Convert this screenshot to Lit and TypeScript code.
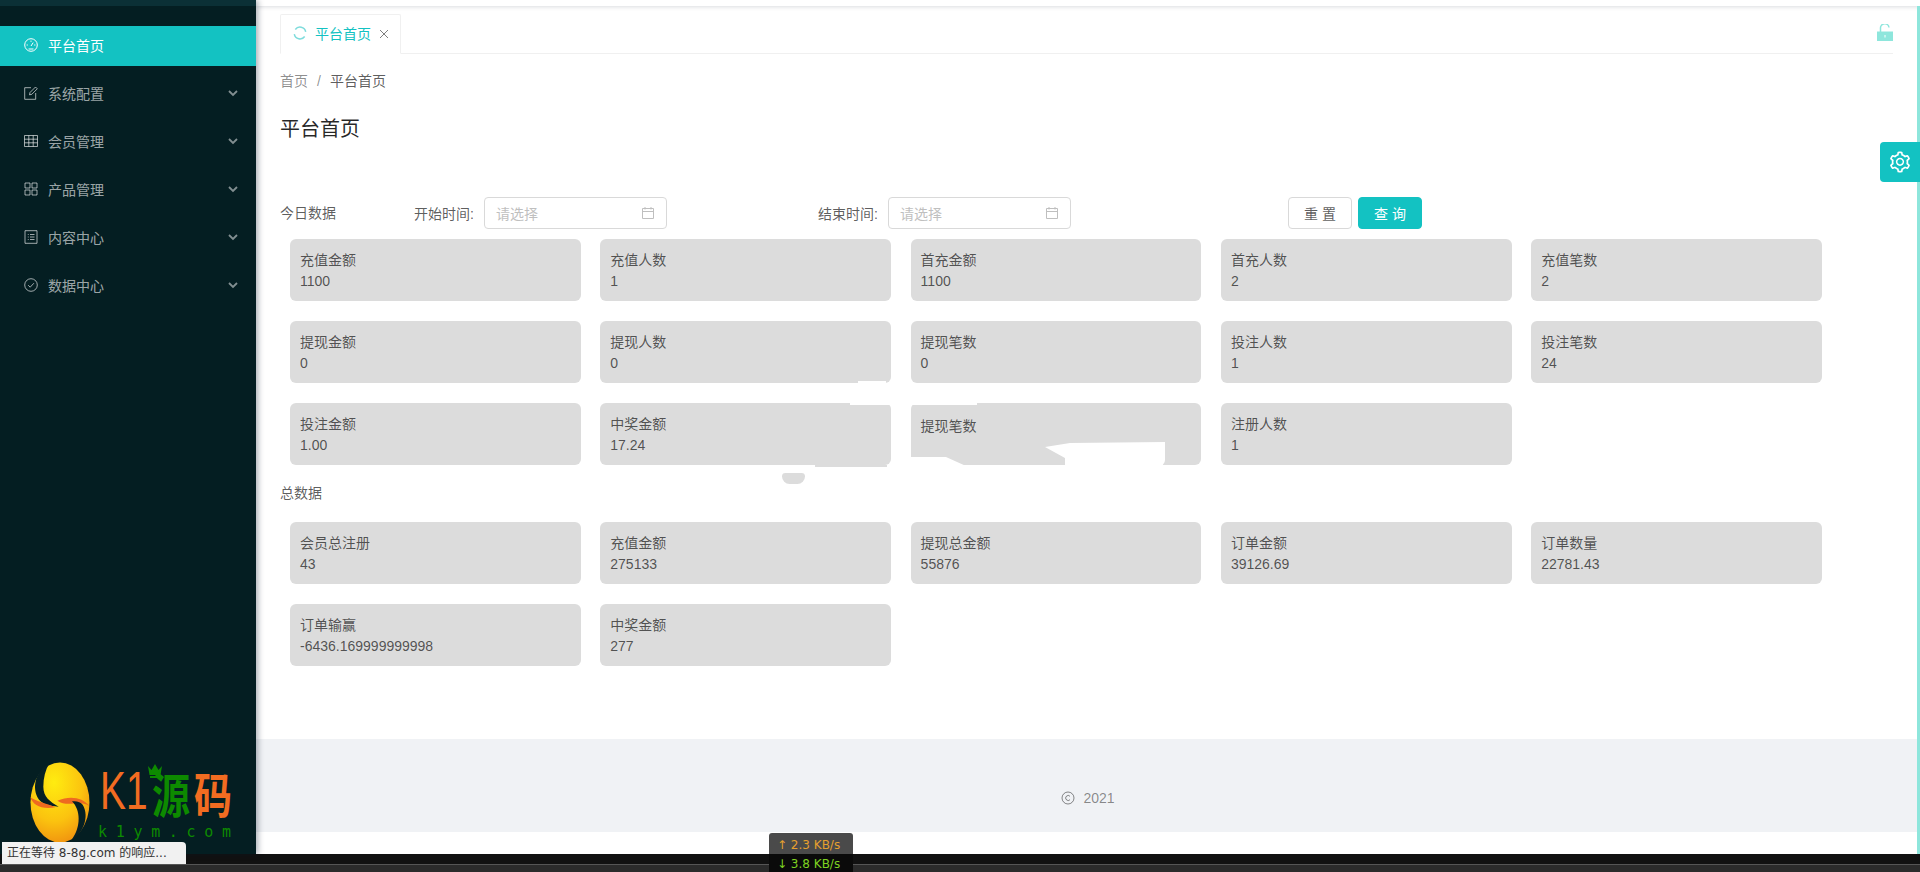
import { LitElement, html, css, svg } from "lit";
import { customElement } from "lit/decorators.js";

const today = [
  ["充值金额", "1100"], ["充值人数", "1"], ["首充金额", "1100"], ["首充人数", "2"], ["充值笔数", "2"],
  ["提现金额", "0"], ["提现人数", "0"], ["提现笔数", "0"], ["投注人数", "1"], ["投注笔数", "24"],
  ["投注金额", "1.00"], ["中奖金额", "17.24"], ["提现笔数", ""], ["注册人数", "1"],
];
const total = [
  ["会员总注册", "43"], ["充值金额", "275133"], ["提现总金额", "55876"], ["订单金额", "39126.69"], ["订单数量", "22781.43"],
  ["订单输赢", "-6436.169999999998"], ["中奖金额", "277"],
];

const icons: Record<string, unknown> = {
  dash: svg`<circle cx="7" cy="7" r="6.300"/><path d="M7 8 9.200 4.600M2.600 7h1.200M10.200 7h1.200M7 2.600v1.200M4.500 11h5"/>`,
  edit: svg`<path d="M11.700 7V13.300H.7V1.700h6.300M5.500 8.800 6 6.500 11.500 1l1.800 1.800L7.800 8.300z"/>`,
  table: svg`<path d="M.5 1.500h13v11H.5zM.5 5.200h13M.5 8.800h13M4.800 1.500v11M9.200 1.500v11"/>`,
  grid: svg`<path d="M1 1h5v5H1zM8 1h5v5H8zM1 8h5v5H1zM8 8h5v5H8z"/>`,
  doc: svg`<path d="M1 .7h12v12.600H1zM6 4.500h4.500M6 7h4.500M6 9.500h4.500M3.800 4.500h.9M3.800 7h.9M3.800 9.500h.9"/>`,
  check: svg`<circle cx="7" cy="7" r="6.300"/><path d="M4.200 7.200 6.200 9.200 9.900 5.200"/>`,
};
const menu = [
  ["dash", "平台首页"], ["edit", "系统配置"], ["table", "会员管理"], ["grid", "产品管理"], ["doc", "内容中心"], ["check", "数据中心"],
];

@customElement("app-root")
export class AppRoot extends LitElement {
  static styles = css`
    :host { display: block; height: 872px; width: 1920px; overflow: hidden; position: relative;
      font-family: "Liberation Sans", "Noto Sans CJK SC", sans-serif; font-size: 14px; color: rgba(0,0,0,.65); background: #fff; }
    .page { display: flex; height: 854px; }
    .side { width: 256px; flex: none; background: #041e22; position: relative; z-index: 2;
      box-shadow: 2px 0 6px rgba(0,21,41,.35); display: flex; flex-direction: column; }
    .side-top { height: 6px; background: #0b3036; margin-bottom: 20px; flex: none; }
    .mi { height: 40px; margin-bottom: 8px; display: flex; align-items: center; padding-left: 24px; padding-bottom: 2px; box-sizing: border-box;
      color: rgba(255,255,255,.62); position: relative; }
    .mi.on { background: #13c2c2; color: #fff; }
    .mi svg.ic { width: 14px; height: 14px; margin-right: 10px; fill: none; stroke: currentColor; stroke-width: 1; }
    .mi svg.ar { position: absolute; right: 18px; top: 14px; width: 10px; height: 10px; fill: none; stroke: rgba(255,255,255,.5); stroke-width: 1.800; }
    .logo { margin-top: auto; height: 90px; padding-left: 28px; flex: none; }
    .logo svg { display: block; overflow: visible; }
    .main { flex: 1; min-width: 0; display: flex; flex-direction: column; position: relative; }
    .head { height: 6px; background: #fff; box-shadow: 0 1px 4px rgba(0,21,41,.15); flex: none; position: relative; z-index: 1; }
    .tabs { margin: 8px 27px 0 24px; height: 39px; border-bottom: 1px solid #f0f0f0; display: flex; justify-content: space-between; flex: none; box-sizing: content-box; }
    .tab { width: 121px; height: 40px; border: 1px solid #f0f0f0; border-bottom: 1px solid #fff; border-radius: 2px 2px 0 0;
      display: flex; align-items: center; color: #13c2c2; padding: 0 0 3px 12px; box-sizing: border-box; }
    .tab svg.sp { width: 14px; height: 14px; margin-right: 8px; }
    .tab svg.x { width: 10px; height: 10px; margin-left: 8px; margin-top: 2px; stroke: rgba(0,0,0,.5); fill: none; stroke-width: 1; }
    .lock { margin: 10px 0 0 0; width: 16px; height: 17px; }
    .crumb { margin: 16px 0 0 24px; height: 22px; line-height: 22px; display: flex; color: rgba(0,0,0,.45); }
    .crumb .sl { margin: 0 9px; }
    .crumb .cur { color: rgba(0,0,0,.65); }
    h1 { margin: 21px 0 0 24px; font-size: 20px; font-weight: 400; line-height: 32px; color: rgba(0,0,0,.85); }
    .filter { margin: 52px 0 0 24px; height: 32px; display: flex; align-items: center; }
    .sec { width: 56px; line-height: 22px; }
    .lb { width: 70px; white-space: nowrap; flex: none; }
    .lb.a { margin-left: 78px; }
    .lb.b { margin-left: 151px; }
    .inp { width: 183px; height: 32px; box-sizing: border-box; border: 1px solid #d9d9d9; border-radius: 4px; padding: 0 11px;
      display: flex; align-items: center; justify-content: space-between; color: #bfbfbf; }
    .inp svg { width: 14px; height: 14px; fill: none; stroke: #bfbfbf; stroke-width: 1; }
    .btn { width: 64px; height: 32px; box-sizing: border-box; border-radius: 4px; display: flex; align-items: center; justify-content: center;
      border: 1px solid #d9d9d9; letter-spacing: 4px; padding-left: 4px; background: #fff; }
    .btn.r { margin-left: 217px; }
    .btn.q { margin-left: 6px; background: #13c2c2; border-color: #13c2c2; color: #fff; }
    .grid { margin: 10px 0 0 34px; width: 1532px; display: grid; grid-template-columns: repeat(5, 1fr); column-gap: 19.500px; row-gap: 20px; }
    .card { height: 62px; box-sizing: border-box; background: #dcdcdc; border-radius: 6px; padding: 10.500px 10px 0; position: relative; line-height: 21px; }
    .card.shift { padding-top: 13px; }
    .total-t { margin: 17px 0 0 24px; line-height: 22px; height: 22px; }
    .grid.t { margin-top: 18px; }
    .foot { position: absolute; left: 0; right: 0; top: 739px; height: 93px; background: #f0f2f5; display: flex; align-items: center;
      justify-content: center; color: rgba(0,0,0,.45); gap: 8px; padding-top: 25px; box-sizing: border-box; }
    .foot svg { width: 14px; height: 14px; fill: none; stroke: rgba(0,0,0,.45); stroke-width: 1; }
    .strip { position: absolute; right: 0; top: 6px; width: 3.500px; height: 848px; background: #8ee6dc; z-index: 3; }
    .gear { position: absolute; right: 0; top: 142px; width: 40px; height: 40px; background: #13c2c2; border-radius: 4px 0 0 4px; z-index: 4;
      display: flex; align-items: center; justify-content: center; }
    .gear svg { width: 24px; height: 24px; fill: #fff; }
    .wipe { position: absolute; background: #fff; z-index: 5; }
    .gray { position: absolute; background: #dcdcdc; z-index: 5; }
    .w1 { left: 850px; top: 403px; width: 42px; height: 2px; }
    .w2 { left: 910px; top: 403px; width: 67px; height: 2px; }
    .w3 { left: 910px; top: 457px; width: 56px; height: 9px; clip-path: polygon(0 0, 36px 0, 56px 100%, 0 100%); }
    .w4 { left: 1045px; top: 442px; width: 120px; height: 24px; clip-path: polygon(0 5px, 25px 1px, 100% 0, 100% 100%, 20px 100%, 20px 16px); border-bottom-right-radius: 6px; }
    .w5 { left: 858px; top: 381px; width: 28px; height: 2px; }
    .g1 { left: 782px; top: 473px; width: 23px; height: 11px; border-radius: 5px 5px 11px 11px; }
    .g2 { left: 815px; top: 465px; width: 72px; height: 2px; }
    .taskbar { height: 18px; background: #111; position: relative; }
    .taskbar::after { content: ""; position: absolute; left: 0; right: 0; top: 10px; bottom: 0; background: #2b2b2b; border-top: 1px solid #555; }
    .status { position: absolute; left: 2px; top: 842px; width: 184px; height: 22px; box-sizing: border-box; background: #f1f1f1; border-radius: 0 4px 0 0;
      z-index: 6; padding-left: 5px; font: 12px/22px "DejaVu Sans", "Noto Sans CJK SC", sans-serif; color: #333; white-space: nowrap; }
    .speed { position: absolute; left: 769px; top: 833px; width: 84px; height: 39px; border-radius: 3px 3px 0 0; z-index: 6;
      background: linear-gradient(#4a4a4a 21px, #0a0a0a 21px);
      font: 12px/19px "DejaVu Sans", sans-serif; padding: 3px 0 0 8px; box-sizing: border-box; white-space: nowrap; }
    .speed .u { color: #e6a02e; }
    .speed .d { color: #7ed321; }
  `;

  private card(c: string[]) {
    return html`<div class="card ${c[1] ? "" : "shift"}"><div>${c[0]}</div>${c[1] ? html`<div>${c[1]}</div>` : ""}</div>`;
  }

  render() {
    return html`
      <div class="page">
        <aside class="side">
          <div class="side-top"></div>
          ${menu.map((m, i) => html`<div class="mi ${i === 0 ? "on" : ""}">
            <svg class="ic" viewBox="0 0 14 14">${icons[m[0]]}</svg>${m[1]}
            ${i ? html`<svg class="ar" viewBox="0 0 10 10"><path d="M1 3l4 4 4-4"/></svg>` : ""}
          </div>`)}
          <div class="logo">
            <svg width="210" height="90" viewBox="0 0 210 90">
              <defs><radialGradient id="g" cx=".4" cy=".25" r=".8"><stop offset="0" stop-color="#ffec10"/><stop offset=".6" stop-color="#fbc30f"/><stop offset="1" stop-color="#f0900f"/></radialGradient></defs>
              <ellipse cx="32" cy="38.500" rx="29.500" ry="40" fill="url(#g)"/>
              <g transform="translate(-8 -4) scale(.3333)">
                <path d="M88 10C46 32 34 85 56 118C68 134 88 138 116 140C90 125 70 110 70 80C70 55 76 30 88 10z" fill="#062024"/>
                <path d="M31 112C38 135 65 150 106 142C78 130 50 125 31 112z" fill="#ee6a20"/>
                <path d="M112 122C150 106 188 112 208 138C190 126 170 128 155 131C140 133 125 130 112 122z" fill="#ee6a20"/>
                <path d="M156 124C182 150 184 200 155 240C188 222 210 170 188 134C182 126 170 122 156 124z" fill="#062024"/>
              </g>
              <text transform="translate(72 45) scale(.72 1)" fill="#f26c21" font-family="Liberation Sans" font-size="54">K1</text>
              <text transform="translate(124 49) scale(1 1.250)" font-family="Noto Sans CJK SC" font-weight="700" font-size="38"><tspan fill="#0d8a00">源</tspan><tspan fill="#f26c21" dx="4">码</tspan></text>
              <path d="M120 2l3.500 4 3.500-6 3.500 6 3.500-4-1.500 9h-11zM122 12h10v2h-10z" fill="#0d8a00"/>
              <text x="70" y="73" fill="#0d8a00" font-family="DejaVu Sans Mono" font-size="15" textLength="133">k1ym.com</text>
            </svg>
          </div>
        </aside>
        <main class="main">
          <div class="head"></div>
          <div class="tabs">
            <div class="tab">
              <svg class="sp" viewBox="0 0 14 14" fill="none" stroke="#7fdcdc" stroke-width="1.500"><path d="M2.300 3.500A5.800 5.800 0 0 1 12.700 5.800M11.700 10.500A5.800 5.800 0 0 1 1.300 8.200"/></svg>平台首页<svg class="x" viewBox="0 0 10 10"><path d="M1 1l8 8M9 1l-8 8"/></svg>
            </div>
            <svg class="lock" viewBox="0 0 16 17"><path d="M3.500 8V4.500a4 4 0 0 1 8.500-1" fill="none" stroke="#8ee6dc" stroke-width="1.500"/><path d="M0 7.500h16V17H0z" fill="#8ee6dc"/><path d="M8 11v2.500" stroke="#fff"/></svg>
          </div>
          <div class="crumb"><span>首页</span><span class="sl">/</span><span class="cur">平台首页</span></div>
          <h1>平台首页</h1>
          <div class="filter">
            <span class="sec">今日数据</span>
            <span class="lb a">开始时间:</span>
            <div class="inp">请选择<svg viewBox="0 0 14 14"><path d="M1.500 2.500h11v10h-11zM1.500 5.500h11M4 1v2.500M10 1v2.500"/></svg></div>
            <span class="lb b">结束时间:</span>
            <div class="inp">请选择<svg viewBox="0 0 14 14"><path d="M1.500 2.500h11v10h-11zM1.500 5.500h11M4 1v2.500M10 1v2.500"/></svg></div>
            <div class="btn r">重置</div>
            <div class="btn q">查询</div>
          </div>
          <div class="grid">${today.map((c) => this.card(c))}</div>
          <div class="total-t">总数据</div>
          <div class="grid t">${total.map((c) => this.card(c))}</div>
          <div class="foot">
            <svg viewBox="0 0 14 14"><circle cx="7" cy="7" r="6"/><path d="M9 5.300A2.500 2.500 0 1 0 9 8.700"/></svg>2021
          </div>
        </main>
      </div>
      <div class="taskbar"></div>
      <div class="strip"></div>
      <div class="gear">
        <svg viewBox="0 0 1024 1024"><path d="M924.8 625.7l-65.5-56c3.1-19 4.7-38.4 4.7-57.8s-1.6-38.8-4.7-57.8l65.5-56a32.03 32.03 0 0 0 9.3-35.2l-.9-2.6a443.74 443.74 0 0 0-79.7-137.9l-1.8-2.1a32.12 32.12 0 0 0-35.1-9.5l-81.3 28.9c-30-24.6-63.5-44-99.7-57.6l-15.7-85a32.05 32.05 0 0 0-25.8-25.7l-2.7-.5c-52.1-9.4-106.9-9.4-159 0l-2.7.5a32.05 32.05 0 0 0-25.8 25.7l-15.8 85.4a351.86 351.86 0 0 0-99 57.4l-81.9-29.1a32 32 0 0 0-35.1 9.5l-1.8 2.1a446.02 446.02 0 0 0-79.7 137.9l-.9 2.6c-4.5 12.5-.8 26.5 9.3 35.2l66.3 56.6c-3.1 18.8-4.6 38-4.6 57.1 0 19.2 1.5 38.4 4.6 57.1L99 625.5a32.03 32.03 0 0 0-9.3 35.2l.9 2.6c18.1 50.4 44.9 96.9 79.7 137.9l1.8 2.1a32.12 32.12 0 0 0 35.1 9.5l81.9-29.1c29.8 24.5 63.1 43.9 99 57.4l15.8 85.4a32.05 32.05 0 0 0 25.8 25.7l2.7.5a449.4 449.4 0 0 0 159 0l2.7-.5a32.05 32.05 0 0 0 25.8-25.7l15.7-85a350 350 0 0 0 99.7-57.6l81.3 28.9a32 32 0 0 0 35.1-9.5l1.8-2.1c34.8-41.1 61.6-87.5 79.7-137.9l.9-2.6c4.5-12.3.8-26.3-9.3-35zM788.3 465.9c2.5 15.1 3.8 30.6 3.8 46.1s-1.3 31-3.8 46.1l-6.6 40.1 74.7 63.9a370.03 370.03 0 0 1-42.6 73.6L721 702.8l-31.4 25.8c-23.9 19.6-50.5 35-79.3 45.8l-38.1 14.3-17.9 97a377.5 377.5 0 0 1-85 0l-17.9-97.2-37.8-14.5c-28.5-10.8-55-26.2-78.7-45.7l-31.4-25.9-93.4 33.2c-17-22.9-31.2-47.6-42.6-73.6l75.5-64.5-6.5-40c-2.4-14.9-3.7-30.3-3.7-45.5 0-15.3 1.2-30.6 3.7-45.5l6.5-40-75.5-64.5c11.3-26.1 25.6-50.7 42.6-73.6l93.4 33.2 31.4-25.9c23.7-19.5 50.2-34.9 78.7-45.7l37.9-14.3 17.9-97.2c28.1-3.2 56.8-3.2 85 0l17.9 97 38.1 14.3c28.7 10.8 55.4 26.2 79.3 45.8l31.4 25.8 92.8-32.9c17 22.9 31.2 47.6 42.6 73.6L781.8 426l6.5 39.9zM512 326c-97.2 0-176 78.8-176 176s78.8 176 176 176 176-78.8 176-176-78.8-176-176-176zm79.2 255.2A111.6 111.6 0 0 1 512 614c-29.9 0-58-11.7-79.2-32.8A111.6 111.6 0 0 1 400 502c0-29.9 11.7-58 32.8-79.2C454 401.6 482.1 390 512 390c29.9 0 58 11.6 79.2 32.8A111.6 111.6 0 0 1 624 502c0 29.9-11.7 58-32.8 79.2z"/></svg>
      </div>
      <div class="wipe w1"></div><div class="wipe w2"></div><div class="wipe w3"></div><div class="wipe w4"></div><div class="wipe w5"></div>
      <div class="gray g1"></div><div class="gray g2"></div>
      <div class="status">正在等待 8-8g.com 的响应...</div>
      <div class="speed"><div class="u">↑ 2.3 KB/s</div><div class="d">↓ 3.8 KB/s</div></div>
    `;
  }
}
